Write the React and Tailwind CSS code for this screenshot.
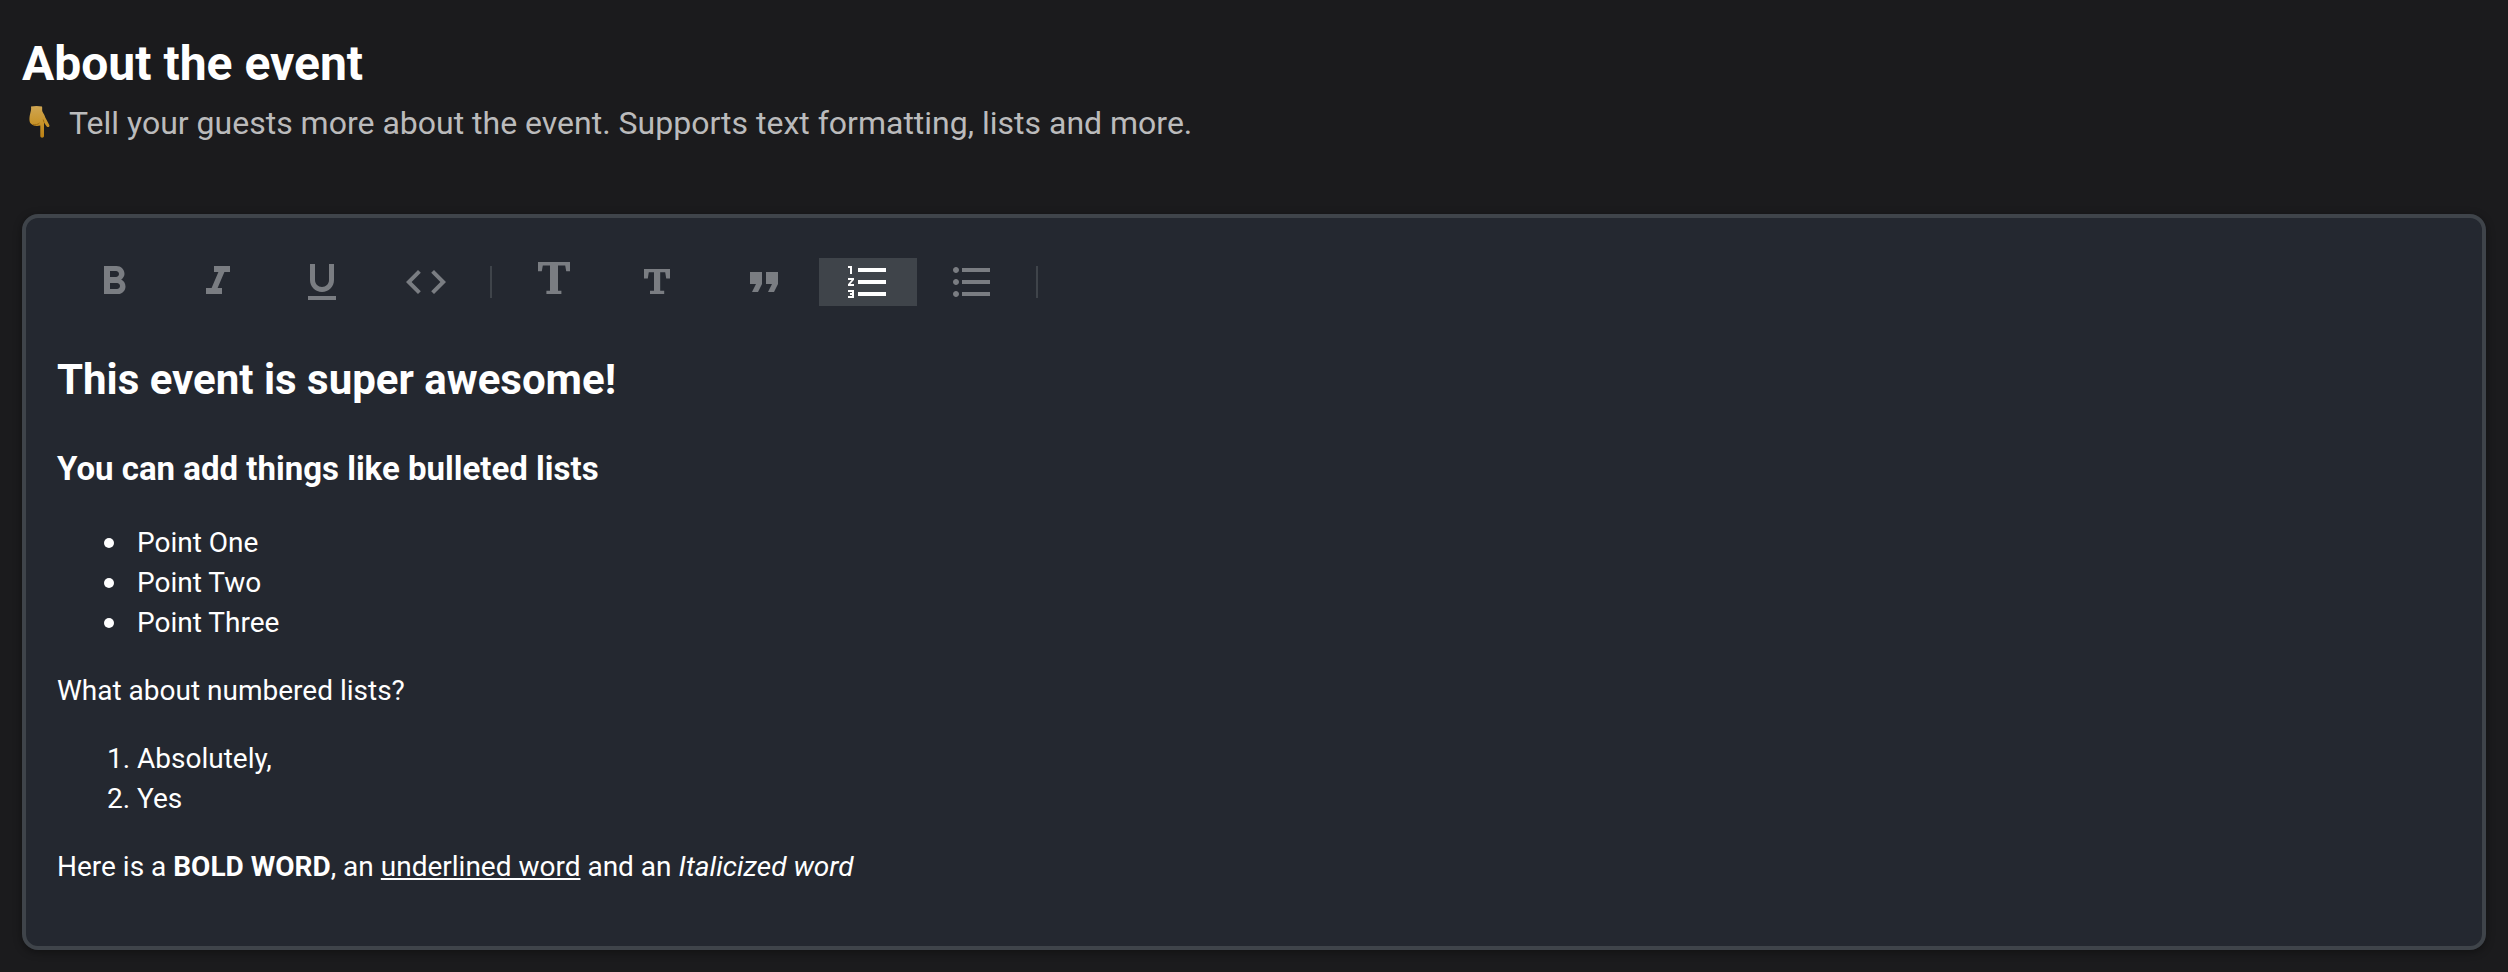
const Icon = ({ children }) => (
  <svg viewBox="0 0 24 24" className="size-12" fill="currentColor" aria-hidden="true">
    {children}
  </svg>
);

const ToolButton = ({ label, active, children }) => (
  <button
    type="button"
    aria-label={label}
    aria-pressed={Boolean(active)}
    className={
      active
        ? "flex h-12 w-[98px] items-center justify-center bg-[#3f444a] text-white"
        : "flex h-12 w-[98px] items-center justify-center text-[#7a7d82]"
    }
  >
    <Icon>{children}</Icon>
  </button>
);

const Divider = () => <div className="mx-[9px] h-8 w-[2px] bg-[#3f444a]" />;

const Toolbar = () => (
  <div className="flex flex-wrap items-center gap-[6px] pl-2" role="toolbar" aria-label="Formatting">
    <ToolButton label="Bold">
      <path d="M15.6 10.79c.97-.67 1.65-1.77 1.65-2.79 0-2.26-1.75-4-4-4H7v14h7.04c2.09 0 3.71-1.7 3.71-3.79 0-1.52-.86-2.82-2.15-3.42zM10 6.5h3c.83 0 1.5.67 1.5 1.5s-.67 1.5-1.5 1.5h-3v-3zm3.5 9H10v-3h3.5c.83 0 1.5.67 1.5 1.5s-.67 1.5-1.5 1.5z" />
    </ToolButton>
    <ToolButton label="Italic">
      <path d="M10 4v3h2.21l-3.42 8H6v3h8v-3h-2.21l3.42-8H18V4z" />
    </ToolButton>
    <ToolButton label="Underline">
      <path d="M12 17c3.31 0 6-2.69 6-6V3h-2.5v8c0 1.93-1.57 3.5-3.5 3.5S8.5 12.93 8.5 11V3H6v8c0 3.31 2.69 6 6 6zm-7 2v2h14v-2H5z" />
    </ToolButton>
    <ToolButton label="Code">
      <path d="M9.4 16.6L4.8 12l4.6-4.6L8 6l-6 6 6 6 1.4-1.4zm5.2 0l4.6-4.6-4.6-4.6L16 6l6 6-6 6-1.4-1.4z" />
    </ToolButton>
    <Divider />
    <ToolButton label="Large heading">
      <path d="M3 2h16v4.6h-1.9l-.5-2.8H13v12.600h1.700V18H7.200v-1.600H9V3.800H5.400l-.5 2.800H3z" />
    </ToolButton>
    <ToolButton label="Small heading">
      <path d="M4 5.500h13v4.800h-1.900l-.5-3.200h-2.500v9.300h2V18H7v-1.600h2V7.100H6.400l-.5 3.200H4z" />
    </ToolButton>
    <ToolButton label="Quote">
      <path d="M6 17h3l2-4V7H5v6h3zm8 0h3l2-4V7h-6v6h3z" />
    </ToolButton>
    <ToolButton label="Numbered list" active>
      <path d="M2 17h2v.5H3v1h1v.5H2v1h3v-4H2v1zm1-9h1V4H2v1h1v3zm-1 3h1.8L2 13.1v.9h3v-1H3.2L5 10.9V10H2v1zm5-6v2h14V5H7zm0 14h14v-2H7v2zm0-6h14v-2H7v2z" />
    </ToolButton>
    <ToolButton label="Bulleted list">
      <path d="M4 10.5c-.83 0-1.5.67-1.5 1.5s.67 1.5 1.5 1.5 1.5-.67 1.5-1.5-.67-1.5-1.5-1.5zm0-6c-.83 0-1.5.67-1.5 1.5S3.17 7.5 4 7.5 5.5 6.83 5.5 6 4.83 4.5 4 4.5zm0 12c-.83 0-1.5.68-1.5 1.5s.68 1.5 1.5 1.5 1.5-.68 1.5-1.5-.67-1.5-1.5-1.5zM7 19h14v-2H7v2zm0-6h14v-2H7v2zm0-8v2h14V5H7z" />
    </ToolButton>
    <Divider />
  </div>
);

const PointingHand = () => (
  <svg viewBox="0 0 32 36" className="h-9 w-8" role="img" aria-label="Pointing down">
    <defs>
      <linearGradient id="hand" x1="0" y1="0" x2="0" y2="1">
        <stop offset="0" stopColor="#cfa653" />
        <stop offset="0.5" stopColor="#c8952c" />
        <stop offset="1" stopColor="#bb8014" />
      </linearGradient>
    </defs>
    <path
      fill="url(#hand)"
      d="M9 1.500C12 .7 17 .7 20 1.500c.5 1.800-.2 3.500.4 5 1 2 2.200 3.500 2.900 6l4 7.500c.8 2-1.400 2.800-2.800 1.200L22 17.500V31c0 2.300-3.700 2.300-3.700 0V20.500c-3.300 1-7 .5-9-1.500C7 17.500 7.200 13 8 9.500c.6-3 1.500-4.500 1-8z"
    />
    <path fill="none" stroke="#a06d12" strokeWidth="1" d="M11 19.500c2.500.5 5 0 6.500-1.500M22 17.500l-.8-3" />
  </svg>
);

const Bullet = ({ children }) => (
  <li className="flex items-center gap-[23px] before:size-[10px] before:rounded-full before:bg-white">
    {children}
  </li>
);

const Description = () => (
  <div className="mt-11 text-[28px] leading-10">
    <h2 className="text-[42px] leading-[60px] font-bold">This event is super awesome!</h2>
    <h3 className="mt-9 text-[33px] leading-[46px] font-bold">You can add things like bulleted lists</h3>
    <ul className="mt-[31px] pl-[47px]">
      <Bullet>Point One</Bullet>
      <Bullet>Point Two</Bullet>
      <Bullet>Point Three</Bullet>
    </ul>
    <p className="mt-7">What about numbered lists?</p>
    <ol className="mt-7 list-decimal pl-20">
      <li>Absolutely,</li>
      <li>Yes</li>
    </ol>
    <p className="mt-7">
      Here is a <strong className="font-bold">BOLD WORD</strong>, an{" "}
      <u className="underline">underlined word</u> and an <em>Italicized word</em>
    </p>
  </div>
);

export default function App() {
  return (
    <main className="min-h-screen bg-[#1b1b1d] px-[22px] pt-8 pb-[22px] font-[Roboto,sans-serif] text-white">
      <h1 className="text-[48px] leading-[64px] font-bold">About the event</h1>
      <div className="mt-[3px] flex items-center gap-[15px] text-[32px] leading-[48px] text-[#bbbbbc]">
        <PointingHand />
        <p>Tell your guests more about the event. Supports text formatting, lists and more.</p>
      </div>
      <section className="mt-[67px] rounded-2xl border-4 border-[#3f444a] bg-[#242830] px-[31px] pt-10 pb-[59px] shadow-[0_2px_8px_rgba(0,0,0,0.4)]">
        <Toolbar />
        <Description />
      </section>
    </main>
  );
}
